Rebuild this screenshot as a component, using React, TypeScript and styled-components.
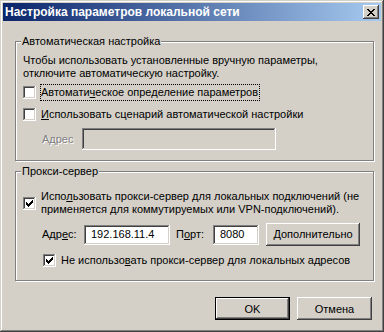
import React from 'react';
import styled, { createGlobalStyle } from 'styled-components';

const face = '#d4d0c8';
const shadow = '#808080';
const dark = '#404040';

const GlobalStyle = createGlobalStyle`
  html, body {
    margin: 0;
    padding: 0;
    background: ${face};
  }
  body {
    font-family: "Liberation Sans", Arial, sans-serif;
    font-size: 11px;
    color: #000;
  }
`;

const Window = styled.div`
  width: 384px;
  height: 332px;
  box-sizing: border-box;
  padding: 3px;
  background: ${face};
  box-shadow: inset -1px -1px ${dark}, inset 1px 1px ${face}, inset -2px -2px ${shadow}, inset 2px 2px #fff;
  display: flex;
  flex-direction: column;
`;

const TitleBar = styled.div`
  height: 18px;
  flex: none;
  display: flex;
  align-items: center;
  justify-content: space-between;
  padding: 0 2px 0 2px;
  background: linear-gradient(to right, #0a246a, #a6caf0);
  color: #fff;
  font-weight: bold;
  font-size: 12px;
`;

const CloseButton = styled.button`
  width: 16px;
  height: 14px;
  padding: 0;
  border: none;
  background: ${face};
  box-shadow: inset -1px -1px ${dark}, inset 1px 1px #fff, inset -2px -2px ${shadow}, inset 2px 2px ${face};
  display: flex;
  align-items: center;
  justify-content: center;
`;

const Content = styled.div`
  padding: 0 7px 0 12px;
  display: flex;
  flex-direction: column;
`;

const Group = styled.fieldset<{ $top: number; $bottom: number }>`
  margin: ${p => p.$top}px 0 0 0;
  padding: 0 7px ${p => p.$bottom}px 7px;
  border: 1px solid ${shadow};
  box-shadow: inset 1px 1px #fff, 1px 1px #fff;
  min-width: 0;
`;

const Legend = styled.legend`
  margin-left: -2px;
  padding: 0 1px;
  line-height: 14px;
  height: 14px;
  background: ${face};
`;

const Note = styled.div`
  margin-top: 6px;
  line-height: 13px;
`;

const CheckRow = styled.label<{ $top: number; $indent?: number }>`
  display: flex;
  align-items: center;
  margin-top: ${p => p.$top}px;
  margin-left: ${p => p.$indent || 0}px;
  line-height: 13px;
`;

const Box = styled.span`
  width: 13px;
  height: 13px;
  flex: none;
  box-sizing: border-box;
  background: #fff;
  box-shadow: inset -1px -1px #fff, inset 1px 1px ${shadow}, inset -2px -2px ${face}, inset 2px 2px ${dark};
  margin-right: 4px;
  display: block;
`;

const Caption = styled.span<{ $focus?: boolean }>`
  padding: ${p => (p.$focus ? '1px 1px 1px 0' : '0 1px 0 1px')};
  border: ${p => (p.$focus ? '1px dotted #000' : 'none')};
`;

const FieldRow = styled.div<{ $top: number; $indent: number }>`
  display: flex;
  align-items: center;
  margin-top: ${p => p.$top}px;
  margin-left: ${p => p.$indent}px;
  line-height: 13px;
`;

const FieldLabel = styled.span<{ $width: number; $pad?: number; $disabled?: boolean }>`
  width: ${p => p.$width}px;
  padding-left: ${p => p.$pad || 0}px;
  box-sizing: border-box;
  flex: none;
  color: ${p => (p.$disabled ? shadow : '#000')};
  text-shadow: ${p => (p.$disabled ? '1px 1px #fff' : 'none')};
`;

const Field = styled.div<{ $width: number; $height: number; $disabled?: boolean }>`
  width: ${p => p.$width}px;
  height: ${p => p.$height}px;
  flex: none;
  box-sizing: border-box;
  padding: 0 4px 0 7px;
  display: flex;
  align-items: center;
  background: ${p => (p.$disabled ? face : '#fff')};
  box-shadow: inset -1px -1px #fff, inset 1px 1px ${shadow}, inset -2px -2px ${face}, inset 2px 2px ${dark};
`;

const Button = styled.button<{ $width: number; $gap?: number; $default?: boolean }>`
  width: ${p => p.$width}px;
  height: 23px;
  flex: none;
  margin-left: ${p => p.$gap || 0}px;
  padding: 0;
  font: inherit;
  color: #000;
  background: ${face};
  border: ${p => (p.$default ? '1px solid #000' : 'none')};
  box-shadow: inset -1px -1px ${dark}, inset 1px 1px #fff, inset -2px -2px ${shadow}, inset 2px 2px ${face};
`;

const Footer = styled.div`
  display: flex;
  justify-content: flex-end;
  gap: 7px;
  margin-top: 16px;
  padding-right: 2px;
`;

const Check = () => (
  <svg width="13" height="13" viewBox="0 0 13 13" shapeRendering="crispEdges">
    <path
      d="M3 5h1v3h-1zM4 6h1v3h-1zM5 7h1v3h-1zM6 6h1v3h-1zM7 5h1v3h-1zM8 4h1v3h-1zM9 3h1v3h-1z"
      fill="#000"
    />
  </svg>
);

const CheckBox: React.FC<{ checked?: boolean }> = ({ checked }) => <Box>{checked && <Check />}</Box>;

const CloseGlyph = () => (
  <svg width="8" height="7" viewBox="0 0 8 7" shapeRendering="crispEdges">
    <path
      d="M0 0h2v1h-2zM6 0h2v1h-2zM1 1h2v1h-2zM5 1h2v1h-2zM2 2h4v1h-4zM3 3h2v1h-2zM2 4h4v1h-4zM1 5h2v1h-2zM5 5h2v1h-2zM0 6h2v1h-2zM6 6h2v1h-2z"
      fill="#000"
    />
  </svg>
);

export default function App() {
  return (
    <>
      <GlobalStyle />
      <Window>
        <TitleBar>
          <span>Настройка параметров локальной сети</span>
          <CloseButton>
            <CloseGlyph />
          </CloseButton>
        </TitleBar>
        <Content>
          <Group $top={13} $bottom={10}>
            <Legend>Автоматическая настройка</Legend>
            <Note>
              Чтобы использовать установленные вручную параметры,
              <br />
              отключите автоматическую настройку.
            </Note>
            <CheckRow $top={4}>
              <CheckBox />
              <Caption $focus>
                Автомати<u>ч</u>еское определение параметров
              </Caption>
            </CheckRow>
            <CheckRow $top={7}>
              <CheckBox />
              <Caption>
                <u>И</u>спользовать сценарий автоматической настройки
              </Caption>
            </CheckRow>
            <FieldRow $top={7} $indent={19}>
              <FieldLabel $width={40} $disabled>
                Адрес
              </FieldLabel>
              <Field $width={194} $height={22} $disabled />
            </FieldRow>
          </Group>
          <Group $top={3} $bottom={13}>
            <Legend>Прокси-сервер</Legend>
            <CheckRow $top={12}>
              <CheckBox checked />
              <Caption>
                Испо<u>л</u>ьзовать прокси-сервер для локальных подключений (не
                <br />
                применяется для коммутируемых или VPN-подключений).
              </Caption>
            </CheckRow>
            <FieldRow $top={7} $indent={19}>
              <FieldLabel $width={42}>
                Адр<u>е</u>с:
              </FieldLabel>
              <Field $width={86} $height={20}>192.168.11.4</Field>
              <FieldLabel $width={43} $pad={6}>
                П<u>о</u>рт:
              </FieldLabel>
              <Field $width={46} $height={20}>8080</Field>
              <Button $width={94} $gap={7}>
                <u>Д</u>ополнительно
              </Button>
            </FieldRow>
            <CheckRow $top={8} $indent={20}>
              <CheckBox checked />
              <Caption>
                Не использо<u>в</u>ать прокси-сервер для локальных адресов
              </Caption>
            </CheckRow>
          </Group>
          <Footer>
            <Button $width={75} $default>
              OK
            </Button>
            <Button $width={75}>Отмена</Button>
          </Footer>
        </Content>
      </Window>
    </>
  );
}
